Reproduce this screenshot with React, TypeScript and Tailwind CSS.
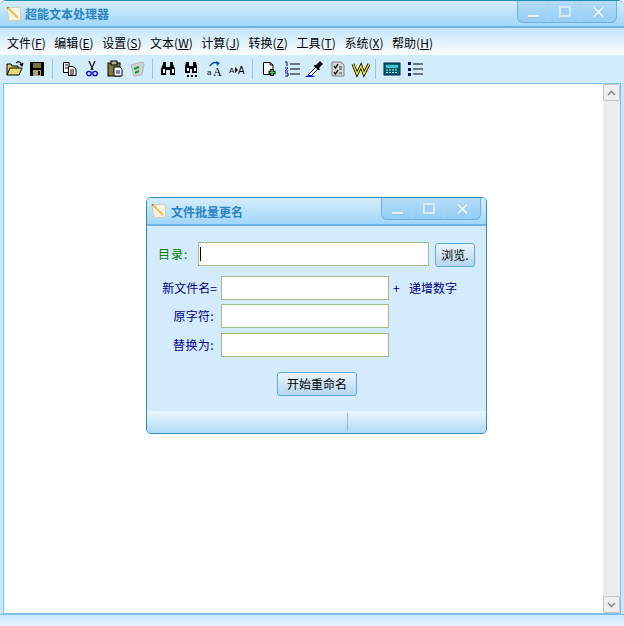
import React from "react";

const font = { fontFamily: '"Noto Sans CJK SC", "Liberation Sans", sans-serif' };

const menus = [
  ["文件", "F"],
  ["编辑", "E"],
  ["设置", "S"],
  ["文本", "W"],
  ["计算", "J"],
  ["转换", "Z"],
  ["工具", "T"],
  ["系统", "X"],
  ["帮助", "H"],
];

function AppIcon() {
  return (
    <svg width="18" height="18" viewBox="0 0 18 18">
      <path d="M2 3 L15 2 L16 15 L4 16 Z" fill="#f6f3e6" stroke="#cfcab4" />
      <path d="M2 2 L13 13" stroke="#eac04a" strokeWidth="2" />
      <path d="M2 2 L4 2.5 L2.5 4 Z" fill="#8a6a30" />
    </svg>
  );
}

function CaptionButtons() {
  return (
    <div className="flex h-[22px] w-[100px] rounded-b-[6px] border border-t-0 border-[#6db2de] bg-gradient-to-b from-[#b4dcf7] to-[#94cdf3]">
      <div className="flex w-[31px] items-center justify-center border-r border-[#a9d5f1] pt-[4px]">
        <div className="mt-[6px] h-[3px] w-[11px] border-b border-[#8fc3e6] bg-[#e9f5fd]" />
      </div>
      <div className="flex w-[32px] items-center justify-center border-r border-[#a9d5f1]">
        <div className="h-[11px] w-[12px] border-2 border-[#d4ebfa] bg-[#9fd0f1]" />
      </div>
      <div className="flex flex-1 items-center justify-center">
        <svg width="13" height="12" viewBox="0 0 13 12">
          <path d="M2 1.5 L11 10.5 M11 1.5 L2 10.5" stroke="#8fc3e6" strokeWidth="3.6" />
          <path d="M2 1.5 L11 10.5 M11 1.5 L2 10.5" stroke="#e9f5fd" strokeWidth="2" />
        </svg>
      </div>
    </div>
  );
}

function Sep() {
  return <div className="ml-[3px] mr-[4px] h-[20px] w-px bg-[#9cc5dc]" />;
}

function Tool({ children }: { children: React.ReactNode }) {
  return (
    <div className="flex h-[20px] w-[23px] items-center justify-center">
      <svg width="20" height="18" viewBox="0 0 20 18">
        {children}
      </svg>
    </div>
  );
}

function Toolbar() {
  return (
    <div className="flex h-[28px] items-center bg-[#d3ecfc] pl-[3px]">
      <Tool>
        <path d="M2 15 V4 H6 L7 6 H13 V8" fill="#d8d060" stroke="#000" />
        <path d="M2 15 L5 8 H17 L14 15 Z" fill="#e4dc70" stroke="#000" />
        <path d="M11 3 Q15 0 17 5 M15 4 L17 6 L18 3" fill="none" stroke="#000" strokeWidth="1.2" />
      </Tool>
      <Tool>
        <rect x="2" y="2" width="14" height="14" fill="#000" />
        <rect x="5" y="3" width="8" height="5" fill="#76763c" />
        <rect x="5" y="10" width="8" height="6" fill="#a8a870" />
        <rect x="10" y="11" width="2" height="4" fill="#000" />
      </Tool>
      <Sep />
      <Tool>
        <path d="M4.5 2.5 H10 V12.5 H4.5 Z" fill="#fff" stroke="#000" />
        <path d="M9.5 6.5 H14 L17 9 V15.5 H9.5 Z" fill="#fff" stroke="#000" />
        <path d="M6 5 H9 M6 8 H9 M11 10 H15 M11 12 H15 M11 14 H15" stroke="#000" />
      </Tool>
      <Tool>
        <path d="M7 1 L11 10 M13 1 L9 10" stroke="#000" strokeWidth="1.1" />
        <circle cx="7" cy="13.5" r="2.2" fill="none" stroke="#0000d0" strokeWidth="1.3" />
        <circle cx="13" cy="13.5" r="2.2" fill="none" stroke="#0000d0" strokeWidth="1.3" />
      </Tool>
      <Tool>
        <rect x="3" y="3" width="12" height="13" fill="#807c40" stroke="#000" />
        <rect x="6" y="1" width="6" height="4" fill="#b0b090" stroke="#000" />
        <path d="M9 7 H15 L17 9 V16 H9 Z" fill="#fff" stroke="#000" />
        <path d="M11 11 H15 M11 13 H15" stroke="#000080" />
      </Tool>
      <Tool>
        <path d="M3 5 L15 2 L16 4 L14 15 L6 16 Z" fill="#d0d2d0" stroke="#b0b4b0" />
        <path d="M6 9 L11 7 M7 13 L11 11" stroke="#18a030" strokeWidth="2" />
      </Tool>
      <Sep />
      <Tool>
        <path d="M2 9 L4 4 H7 V7 H11 V4 H14 L16 9 V15 H11 V10 H7 V15 H2 Z" fill="#000" />
        <rect x="4" y="2" width="3" height="3" fill="#000" />
        <rect x="11" y="2" width="3" height="3" fill="#000" />
        <rect x="4" y="9" width="2" height="4" fill="#fff" />
        <rect x="13" y="9" width="2" height="4" fill="#fff" />
      </Tool>
      <Tool>
        <path d="M3 7 L4 2 H7 V6 H11 V2 H14 L15 7 V13 H10 V9 H8 V13 H3 Z" fill="#000" />
        <rect x="5" y="8" width="2" height="3" fill="#fff" />
        <rect x="12" y="8" width="2" height="3" fill="#fff" />
        <path d="M5 16 H7 M9 16 H11 M13 16 H15" stroke="#000" strokeWidth="2" />
      </Tool>
      <Tool>
        <path d="M5 6 Q8 1 13 3" fill="none" stroke="#10509a" strokeWidth="1.4" />
        <path d="M11 1 L15 3 L12 6 Z" fill="#10509a" />
        <text x="2" y="15" fontSize="8" fontFamily="Liberation Sans" fill="#000">a</text>
        <text x="8" y="16" fontSize="12" fontFamily="Liberation Serif" fill="#000">A</text>
      </Tool>
      <Tool>
        <text x="1" y="13" fontSize="8" fontFamily="Liberation Sans" fill="#000">A</text>
        <path d="M7 7 L10 10 L7 13 Z" fill="#000" />
        <text x="10" y="13.5" fontSize="10" fontFamily="Liberation Sans" fill="#000">A</text>
      </Tool>
      <Sep />
      <Tool>
        <path d="M4.5 2.5 H11 L14 5 V14.5 H4.5 Z" fill="#fff" stroke="#000" />
        <path d="M11 2 V5 H14" fill="none" stroke="#000" />
        <path d="M13 9 V16 M9.5 12.5 H16.5" stroke="#000" strokeWidth="3.6" />
        <path d="M13 10 V15 M10.5 12.5 H15.5" stroke="#40d040" strokeWidth="1.6" />
      </Tool>
      <Tool>
        <path d="M3 2 H5 V6 M3 8 H6 L3 11 H6 M3 13 H6 V16 H3" fill="none" stroke="#000080" />
        <path d="M8 4 H18 M8 9 H18 M8 14 H18" stroke="#000" strokeWidth="1.2" />
      </Tool>
      <Tool>
        <path d="M3 15 L11 7 L13 9 L6 16" fill="#fff" stroke="#000" />
        <path d="M11 5 L15 1 L18 4 L14 8 L15 10 L13 10 L9 6 V5 Z" fill="#000" />
        <path d="M0 17 Q5 13 10 17 Z" fill="#0000e0" />
      </Tool>
      <Tool>
        <path d="M4 2 H13 L16 5 V16 H4 Z" fill="#d8d8d8" stroke="#808080" />
        <path d="M6 6 L7.5 8 L10 4 M6 12 L7.5 14 L10 10" fill="none" stroke="#000" strokeWidth="1.3" />
        <path d="M11 7 H14 M11 9 H14 M11 13 H14" stroke="#404040" />
      </Tool>
      <Tool>
        <path d="M2 4 L6 14 L10 6 L13 14 L18 4" fill="none" stroke="#000" strokeWidth="3" />
        <path d="M2 4 L6 14 L10 6 L13 14 L18 4" fill="none" stroke="#f8f000" strokeWidth="1.4" />
      </Tool>
      <Sep />
      <Tool>
        <rect x="2" y="3" width="16" height="12" fill="#006070" stroke="#002040" />
        <rect x="4" y="5" width="12" height="3" fill="#40c8d8" />
        <path d="M4 10 H16 M4 12.5 H16" stroke="#b8e8f0" strokeDasharray="2 1" />
      </Tool>
      <Tool>
        <path d="M3 2 H6 V5 H3 Z M3 8 H6 V11 H3 Z M3 13 H6 V16 H3 Z" fill="#000080" />
        <path d="M8 4 H18 M8 9 H18 M8 14 H18" stroke="#000" strokeWidth="1.2" />
      </Tool>
    </div>
  );
}

function Field({ label, labelClass }: { label: string; labelClass: string }) {
  return (
    <div className="flex items-center">
      <span className={`w-[70px] text-right text-[#000080] ${labelClass}`}>{label}</span>
      <div className="h-[24px] w-[168px] border border-[#a3bd7f] bg-white" />
    </div>
  );
}

function Dialog() {
  return (
    <div className="absolute left-[142px] top-[113px] flex h-[237px] w-[341px] flex-col rounded-[5px] border border-[#2a8db5] bg-[#d3ebfc]">
      <div className="flex h-[28px] items-start justify-between rounded-t-[4px] border-b-2 border-[#6fb2df] bg-gradient-to-b from-[#d4edfc] to-[#a2d6f9] pr-[5px]">
        <div className="flex h-full items-center gap-[3px] pl-[3px]">
          <AppIcon />
          <span className="pt-[1px] text-[12px] font-bold text-[#2a84c2]">文件批量更名</span>
        </div>
        <CaptionButtons />
      </div>

      <div className="flex flex-1 flex-col pt-[15px]">
        <div className="flex items-center pl-[11px]">
          <span className="w-[40px] tracking-[1px] text-[#008000]">目录:</span>
          <div className="flex h-[24px] w-[231px] items-center border border-[#a3bd7f] bg-white pl-[1px]">
            <div className="h-[14px] w-px bg-black" />
          </div>
          <button className="ml-[6px] mt-[2px] h-[24px] w-[40px] rounded-[3px] border border-[#5da9dc] bg-gradient-to-b from-[#eaf5fc] to-[#b6d6ee] text-black">
            浏览.
          </button>
        </div>

        <div className="mt-[9px] flex flex-col pl-[4px]">
          <div className="flex items-center">
            <Field label="新文件名=" labelClass="pr-[4px]" />
            <span className="ml-[4px] w-[16px] text-[#000080]">+</span>
            <span className="text-[#000080]">递增数字</span>
          </div>
          <div className="mt-[4px]">
            <Field label="原字符:" labelClass="pr-[7px] tracking-[0.3px]" />
          </div>
          <div className="mt-[5px]">
            <Field label="替换为:" labelClass="pr-[7px] tracking-[0.4px]" />
          </div>
        </div>

        <div className="mt-[15px] flex justify-center pl-[1px]">
          <button className="h-[24px] w-[80px] rounded-[3px] border border-[#5da9dc] bg-gradient-to-b from-[#eaf5fc] to-[#b6d6ee] text-black">
            开始重命名
          </button>
        </div>
      </div>

      <div className="flex h-[22px] rounded-b-[4px] bg-gradient-to-b from-[#eaf6fd] to-[#aedbf5]">
        <div className="my-[2px] ml-[200px] w-px bg-[#9fb9cc]" />
      </div>
    </div>
  );
}

export default function App() {
  return (
    <div
      className="flex h-[626px] w-[624px] flex-col overflow-hidden rounded-t-[6px] border-t border-[#1f8fb8] bg-[#c5e6fb] text-[12px] leading-none"
      style={font}
    >
      <div className="flex h-[27px] items-start justify-between border-b-2 border-[#6fb2df] bg-gradient-to-b from-[#d4edfc] to-[#a2d6f9] pr-[7px]">
        <div className="flex h-full items-center gap-[2px] pl-[5px]">
          <AppIcon />
          <span className="pt-[1px] text-[12px] font-bold text-[#2a84c2]">超能文本处理器</span>
        </div>
        <CaptionButtons />
      </div>

      <div className="flex h-[27px] items-center gap-[8.6px] bg-gradient-to-b from-[#c4e5fa] to-[#fbfdff] pl-[7px] pt-[3px]">
        {menus.map(([name, key]) => (
          <span key={name} className="text-[#000]">
            {name}(<span className="underline">{key}</span>)
          </span>
        ))}
      </div>

      <Toolbar />

      <div className="flex min-h-0 flex-1 px-[3px]">
        <div className="relative flex flex-1 justify-end border border-[#7dbfe6] bg-white">
          <Dialog />
          <div className="flex w-[17px] flex-col justify-between bg-[#ececec]">
            <div className="flex h-[17px] items-center justify-center rounded-[2px] border border-[#c4c4c4] bg-[#efefef]">
              <svg width="9" height="6" viewBox="0 0 9 6">
                <path d="M1 5 L4.5 1.5 L8 5" fill="none" stroke="#8a8a8a" strokeWidth="1.6" />
              </svg>
            </div>
            <div className="flex h-[17px] items-center justify-center rounded-[2px] border border-[#c4c4c4] bg-[#efefef]">
              <svg width="9" height="6" viewBox="0 0 9 6">
                <path d="M1 1 L4.5 4.5 L8 1" fill="none" stroke="#8a8a8a" strokeWidth="1.6" />
              </svg>
            </div>
          </div>
        </div>
      </div>

      <div className="h-[12px] shrink-0 border-t border-[#7dbfe6] bg-gradient-to-b from-[#c9e8fb] to-[#e6f5fe]" />
    </div>
  );
}
